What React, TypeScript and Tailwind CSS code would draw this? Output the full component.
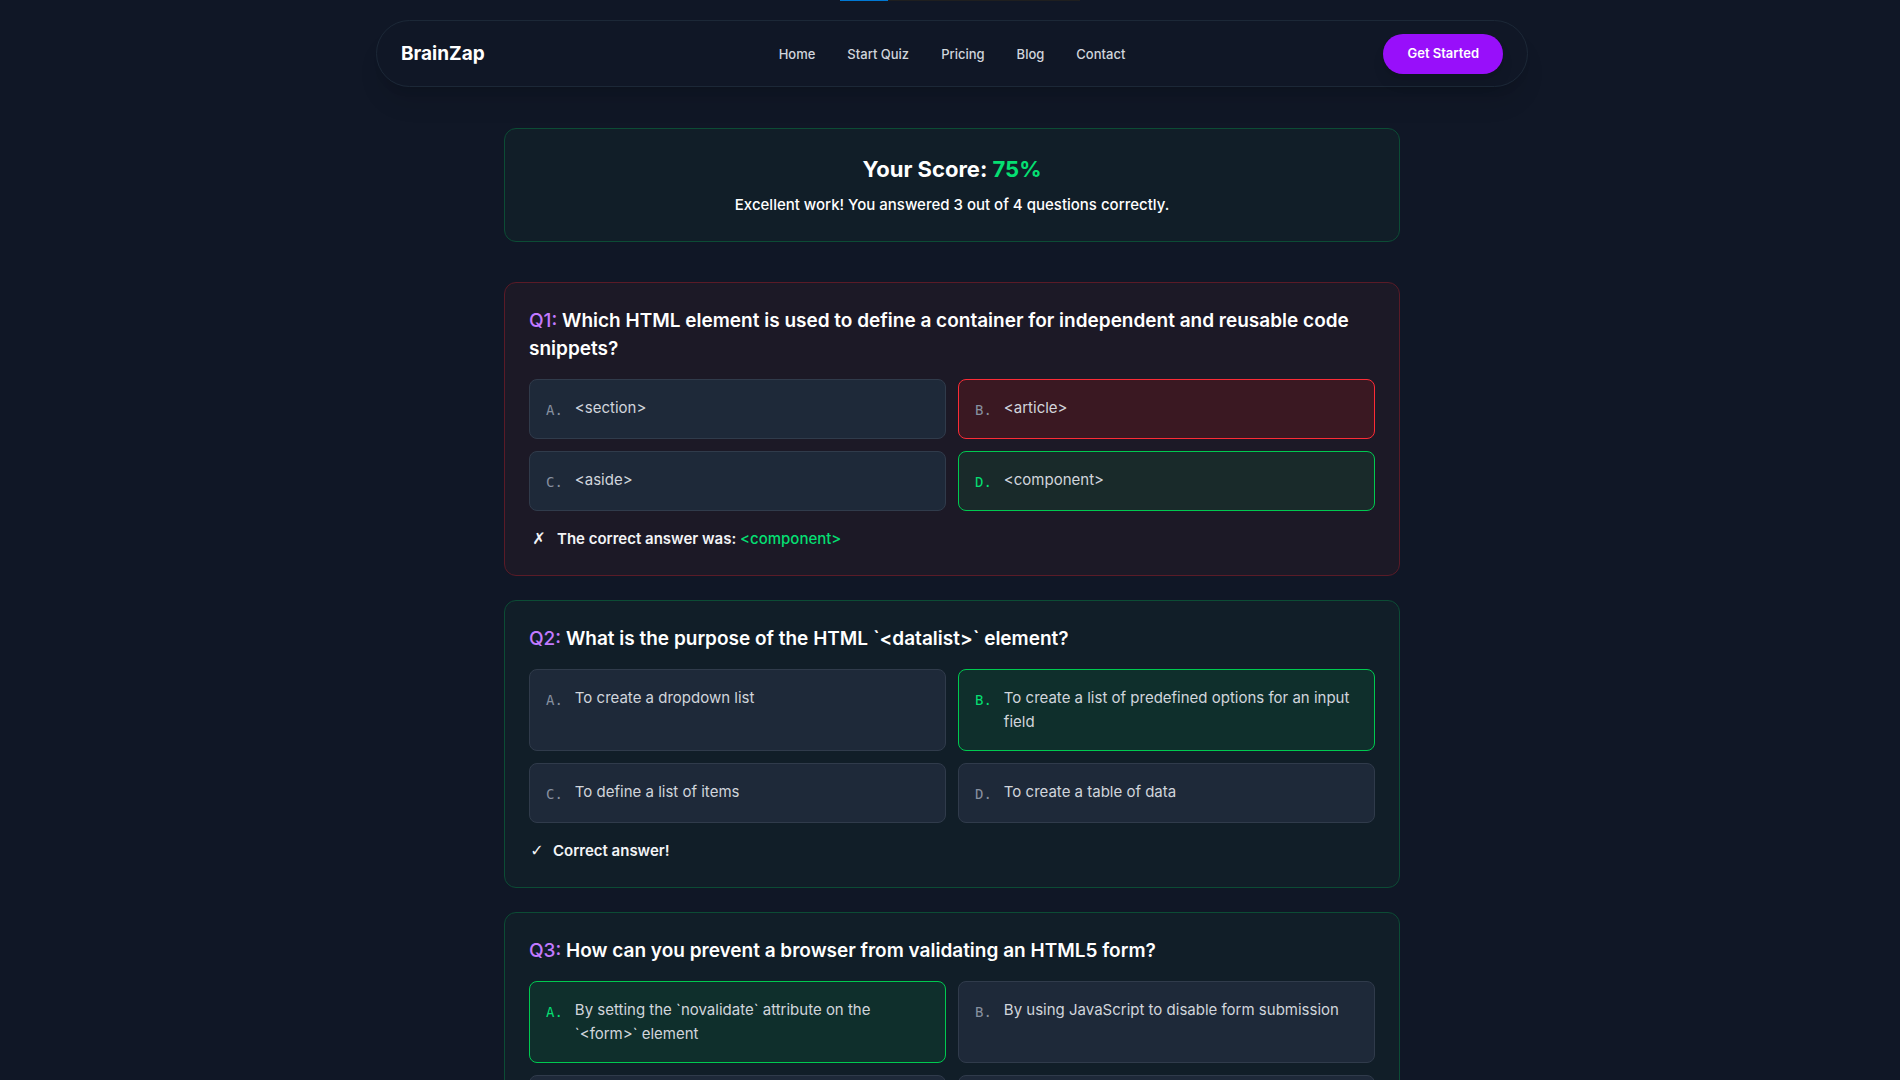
type Option = { text: string; state?: "correct" | "wrong" };
type Question = { title: string; options: Option[]; answer?: string };

const links = ["Home", "Start Quiz", "Pricing", "Blog", "Contact"];

const questions: Question[] = [
  {
    title: "Which HTML element is used to define a container for independent and reusable code snippets?",
    options: [
      { text: "<section>" },
      { text: "<article>", state: "wrong" },
      { text: "<aside>" },
      { text: "<component>", state: "correct" },
    ],
    answer: "<component>",
  },
  {
    title: "What is the purpose of the HTML `<datalist>` element?",
    options: [
      { text: "To create a dropdown list" },
      { text: "To create a list of predefined options for an input field", state: "correct" },
      { text: "To define a list of items" },
      { text: "To create a table of data" },
    ],
  },
  {
    title: "How can you prevent a browser from validating an HTML5 form?",
    options: [
      { text: "By setting the `novalidate` attribute on the `<form>` element", state: "correct" },
      { text: "By using JavaScript to disable form submission" },
      { text: "" },
      { text: "" },
    ],
  },
];

const optionStyles = {
  idle: "border-[#303b4b] bg-[#1e2939]",
  correct: "border-[#00c950] bg-green-500/10",
  wrong: "border-[#fb2c36] bg-[#3a1822]",
};

function Nav() {
  return (
    <header className="px-6 pt-5">
      <nav className="mx-auto grid min-h-[67px] max-w-6xl grid-cols-[1fr_auto_1fr] items-center rounded-full border border-[#1c2837] px-6 shadow-xl">
        <a href="#" className="justify-self-start text-[19px] leading-7 font-bold text-white">
          BrainZap
        </a>
        <ul className="flex gap-8 text-[13px] leading-5 font-medium text-gray-300">
          {links.map((l) => (
            <li key={l}>
              <a href="#">{l}</a>
            </li>
          ))}
        </ul>
        <button
          type="button"
          className="h-10 justify-self-end rounded-full bg-[#980ffa] px-6 text-[13px] font-semibold text-white shadow-lg"
        >
          Get Started
        </button>
      </nav>
    </header>
  );
}

function QuestionCard({ q, n }: { q: Question; n: number }) {
  const tone = q.answer ? "border-[#5a1b27] bg-[#1c1926]" : "border-[#0c4c35] bg-[#111e28]";
  return (
    <section className={"rounded-xl border p-6 " + tone}>
      <h2 className="mb-4 text-[19px] leading-7 font-semibold">
        <span className="font-medium text-[#c27aff]">{`Q${n}:`}</span> {q.title}
      </h2>
      <ol className="mb-4 grid grid-cols-2 gap-3">
        {q.options.map((o, i) => (
          <li
            key={i}
            className={"flex min-h-[60px] items-start gap-3 rounded-lg border p-4 " + optionStyles[o.state ?? "idle"]}
          >
            <span
              className={
                "pt-1 font-['DejaVu_Sans_Mono',monospace] text-sm leading-5 " +
                (o.state === "correct" ? "text-[#05df72]" : "text-[#8790a0]")
              }
            >
              {`${"ABCD"[i]}.`}
            </span>
            <span className="text-[15px] leading-6 text-gray-300">{o.text}</span>
          </li>
        ))}
      </ol>
      <p className="flex items-center gap-2 text-[15px] leading-6 font-semibold text-gray-100">
        <span
          className={
            "text-center font-['DejaVu_Sans',sans-serif] text-base leading-6 font-normal " + (q.answer ? "w-5" : "w-4")
          }
        >
          {q.answer ? "✗" : "✓"}
        </span>
        {q.answer ? (
          <span>
            The correct answer was: <span className="font-medium text-[#05df72]">{q.answer}</span>
          </span>
        ) : (
          <span>Correct answer!</span>
        )}
      </p>
    </section>
  );
}

export default function App() {
  return (
    <div className="h-screen overflow-hidden bg-[#101726] pl-1 font-[Inter,sans-serif] text-white">
      <div className="absolute inset-x-0 top-0 flex justify-center pl-5">
        <div className="h-px w-60 bg-[#1f1f1f]">
          <div className="h-px w-1/5 bg-[#0078d4]" />
        </div>
      </div>
      <Nav />
      <main className="mx-auto mt-[41px] flex max-w-4xl flex-col gap-6">
        <section className="mb-4 rounded-xl border border-[#0c4c35] bg-[#111e28] p-6 text-center">
          <h1 className="mb-2 text-[22px] leading-8 font-bold">
            Your Score: <span className="text-[#05df72]">75%</span>
          </h1>
          <p className="text-[15px] leading-6 font-medium">
            Excellent work! You answered 3 out of 4 questions correctly.
          </p>
        </section>
        {questions.map((q, i) => (
          <QuestionCard key={q.title} q={q} n={i + 1} />
        ))}
      </main>
    </div>
  );
}
